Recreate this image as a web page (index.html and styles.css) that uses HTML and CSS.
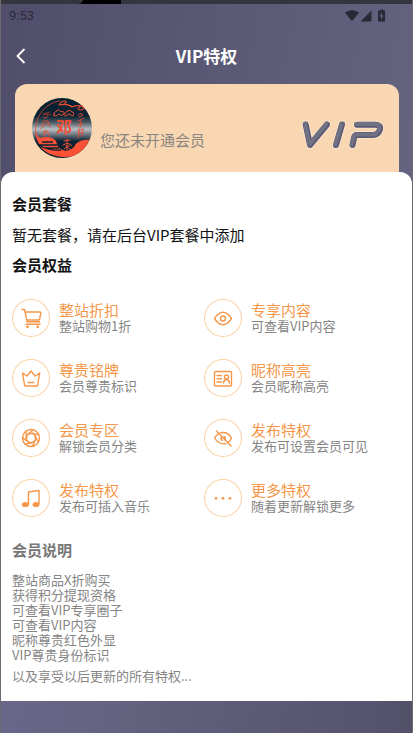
FILE: index.html
```html
<!DOCTYPE html>
<html lang="zh-CN">
<head>
<meta charset="utf-8">
<meta name="viewport" content="width=device-width, initial-scale=1">
<title>VIP特权</title>
<link rel="stylesheet" href="styles.css">
</head>
<body>
<div class="window-edge"><svg width="120" height="4" aria-hidden="true"><path d="M76 4Q81 4 82 0H120V4Z" fill="#000"/></svg></div>
<div class="status">
  <span>9:53</span>
  <svg class="status-icons" width="42" height="14" viewBox="0 0 42 14" aria-hidden="true">
    <path d="M0 3.7Q7 -1.7 14 3.7L7 12.3Z"/><path d="M26.500 1.500V12.500H15.500Z"/>
    <path fill-rule="evenodd" d="M34 1.500H35.500V0.500H38.500V1.500H40V12.500H33V1.500ZM37 3.500L34.500 7.500H36V10.500L38.500 6.500H37Z"/>
  </svg>
</div>
<header class="topbar">
  <button class="back" type="button" aria-label="返回"><svg width="10" height="16" viewBox="0 0 10 16"><path d="M8.500 1L1.500 8L8.500 15" fill="none" stroke="#fff" stroke-width="1.800"/></svg></button>
  <h1>VIP特权</h1>
</header>
<main>
  <section class="card">
    <svg class="avatar" viewBox="0 0 60 60" aria-hidden="true">
      <defs>
        <linearGradient id="metal" x1="0" y1="0" x2="0" y2="1"><stop offset="0" stop-color="#03202f"/><stop offset=".3" stop-color="#0b2433"/><stop offset=".4" stop-color="#46545f"/><stop offset=".52" stop-color="#b9bfc4"/><stop offset=".62" stop-color="#626d77"/><stop offset=".72" stop-color="#0b2231"/><stop offset="1" stop-color="#03202f"/></linearGradient>
        <clipPath id="disc"><circle cx="30" cy="30" r="30"/></clipPath>
      </defs>
      <g clip-path="url(#disc)">
        <path fill="url(#metal)" d="M0 0H60V60H0Z"/>
        <path fill="#fb5137" d="M3 30Q4 39 9 40Q13 38 20 40Q25 42 25 47Q28 52 34 53Q42 51 43 47Q47 41 60 42V52Q46 60 30 59Q4 57 3 30Z"/>
        <path d="M6 47Q18 53 29 52M10 44H21M7 47H25M13 50H27" fill="none" stroke="#082231" stroke-width="1.300"/>
      </g>
      <g fill="none" stroke="#e94c36" stroke-linecap="round" stroke-linejoin="round">
        <path d="M4 38Q2 23 11 12Q19 4 28 3" stroke-width=".8" stroke-dasharray="3 1"/>
        <path d="M27 7Q29 3 33 3Q36 4 32 6Q29 7 27 7Q36 5 40 9Q44 7 50 8Q54 12 48 12Q44 11 48 9" stroke-width="1.100"/>
        <path d="M22 18Q21 14 25 13Q26 10 29 14Q32 12 32 16Q29 19 27 16Q23 20 22 16M33 18Q32 14 36 13Q38 11 40 14Q43 14 41 18L37 16L34 18" stroke-width="1"/>
        <path d="M11 16L18 14M11 18Q15 14 16 18M14 16L19 17" stroke="#9b3a32" stroke-width=".9"/>
        <path d="M12 20L15 19M11 24Q11 29 9 31M12 23H16L18 29M12 28L16 25M11 34L16 33M13 32L12 38M15 35Q18 34 17 38" stroke-width=".9"/>
        <path d="M46 17Q50 14 51 17L47 19M46 23L52 20M45 27Q50 24 51 27M49 22L48 30M46 33L51 31M46 36L51 34M47 31L46 40M51 31L50 38" stroke-width=".9"/>
        <path d="M32 43L38 42M35 41V48M31 47Q37 43 40 48M32 51L38 47M34 48L39 52M35 48V53" stroke-width="1"/>
      </g>
      <text x="32" y="35" text-anchor="middle" class="avatar-name">邓</text>
    </svg>
    <p class="member-state">您还未开通会员</p>
    <svg class="vip-mark" width="86" height="34" viewBox="0 0 86 34" role="img" aria-label="VIP">
      <defs><path id="letters" d="M6.700 7.500L11 28L28 7.500M43 7.500L37 28M58 7.700H76Q82 7.700 81 12.500Q79 18 74 18H58Q55.500 18 55 21L53.500 28"/></defs>
      <g fill="none" stroke-linecap="round" stroke-linejoin="round">
        <use href="#letters" stroke="#fbe3c8" stroke-width="8"/>
        <use href="#letters" stroke="#5a5975" stroke-width="6"/>
        <use href="#letters" stroke="#717184" stroke-width="4" transform="translate(-.6 -.6)"/>
      </g>
    </svg>
  </section>
  <section class="sheet">
    <h2>会员套餐</h2>
    <p class="empty">暂无套餐，请在后台VIP套餐中添加</p>
    <h2>会员权益</h2>
    <ul class="benefits">
      <li><svg class="icon" viewBox="0 0 38 38"><path d="M10 10.500H12.500L15.200 22.800H27.500M13 13H28Q29 13 28.800 14L27.700 20Q27.500 21 26.500 21H15M14 25.200H28"/><circle class="solid" cx="15.500" cy="27.800" r="1.400"/><circle class="solid" cx="25.800" cy="27.800" r="1.400"/></svg><div><h3>整站折扣</h3><p>整站购物1折</p></div></li>
      <li><svg class="icon" viewBox="0 0 38 38"><path d="M10.500 19.500Q14.500 13.300 19 13.300Q23.500 13.300 27.500 19.500Q23.500 25.700 19 25.700Q14.500 25.700 10.500 19.500Z"/><circle cx="19" cy="19.500" r="2.500"/></svg><div><h3>专享内容</h3><p>可查看VIP内容</p></div></li>
      <li><svg class="icon" viewBox="0 0 38 38"><path d="M10.500 14L12.500 26Q12.700 27 14 27H24.500Q25.500 27 25.700 26L27.700 14L23 17L19 12L15 17ZM16 23.500H22"/></svg><div><h3>尊贵铭牌</h3><p>会员尊贵标识</p></div></li>
      <li><svg class="icon" viewBox="0 0 38 38"><rect x="10.500" y="12.500" width="17" height="14.500" rx="1"/><path d="M13 16.500H17.500M13 19.700H17.500M13 23H17.500M19.500 24Q20 20.500 22.500 20.500Q25 20.500 25.500 24"/><circle cx="22.500" cy="18" r="2"/></svg><div><h3>昵称高亮</h3><p>会员昵称高亮</p></div></li>
      <li><svg class="icon" viewBox="0 0 38 38"><circle cx="19" cy="19" r="8.500"/><path id="blade" d="M21.500 10.800L15.800 15.200"/><use href="#blade" transform="rotate(51 19 19)"/><use href="#blade" transform="rotate(103 19 19)"/><use href="#blade" transform="rotate(154 19 19)"/><use href="#blade" transform="rotate(206 19 19)"/><use href="#blade" transform="rotate(257 19 19)"/><use href="#blade" transform="rotate(309 19 19)"/><circle cx="19" cy="19" r="4.500"/></svg><div><h3>会员专区</h3><p>解锁会员分类</p></div></li>
      <li><svg class="icon" viewBox="0 0 38 38"><path d="M14.500 14.800Q12 16.300 10.500 19Q14.500 25.500 22 24.800M16.500 13.700Q24 12.500 27.500 19Q26.500 21.500 24.500 23M12.500 12L27 27M17.500 17.500Q16 20 18.500 21.500M20 17.500Q21.500 18 21.500 20"/></svg><div><h3>发布特权</h3><p>发布可设置会员可见</p></div></li>
      <li><svg class="icon" viewBox="0 0 38 38"><path d="M16.500 25.500V13L27 11.500V25"/><ellipse class="solid" cx="13.300" cy="25.500" rx="3.400" ry="2.600"/><ellipse class="solid" cx="24" cy="25.500" rx="3.400" ry="2.600"/></svg><div><h3>发布特权</h3><p>发布可插入音乐</p></div></li>
      <li><svg class="icon" viewBox="0 0 38 38"><g class="solid"><circle cx="12" cy="19.300" r="1.400"/><circle cx="19" cy="19.300" r="1.400"/><circle cx="26" cy="19.300" r="1.400"/></g></svg><div><h3>更多特权</h3><p>随着更新解锁更多</p></div></li>
    </ul>
    <div class="notes">
      <h2>会员说明</h2>
      <ul>
        <li>整站商品X折购买</li>
        <li>获得积分提现资格</li>
        <li>可查看VIP专享圈子</li>
        <li>可查看VIP内容</li>
        <li>昵称尊贵红色外显</li>
        <li>VIP尊贵身份标识</li>
      </ul>
      <p>以及享受以后更新的所有特权...</p>
    </div>
  </section>
</main>
</body>
</html>
```
FILE: styles.css
```css
* { box-sizing: border-box; margin: 0; padding: 0; }
body {
  min-height: 100vh;
  display: flex;
  flex-direction: column;
  border: solid #6c6c70;
  border-width: 0 1px;
  background: linear-gradient(102deg, #504e6a 0%, #6a6986 100%);
  color: #111;
  font-family: "Noto Sans CJK SC", sans-serif;
  font-size: 15px;
}
body::after {
  content: "";
  flex: 1;
  min-height: 32px;
  background: linear-gradient(95deg, #68678a 0%, #63627f 30%, #53516a 100%);
}
ul { list-style: none; }
.window-edge { height: 4px; background: #35363d; }
.window-edge svg { display: block; }
.status {
  display: flex;
  justify-content: space-between;
  align-items: center;
  height: 24px;
  padding: 0 25px 0 8px;
  font: 13px/24px Roboto, sans-serif;
  color: #2c2b3b;
}
.status-icons { fill: #2a2937; }
.topbar {
  display: grid;
  grid-template-columns: 40px 1fr 40px;
  align-items: center;
  height: 56px;
  color: #fff;
}
.topbar h1 { font-size: 17px; line-height: 24px; text-align: center; }
.back { height: 40px; padding: 0; border: 0; background: none; }
.back svg { display: block; margin: 0 auto; }
.card {
  display: flex;
  align-items: center;
  height: 88px;
  margin: 0 13px 0 14px;
  padding: 0 14px 0 17px;
  border-radius: 12px 12px 0 0;
  background: #f9d7b2;
}
.avatar { width: 60px; height: 60px; }
.avatar-name { fill: #f24e34; font-size: 16px; font-weight: 700; }
.member-state { flex: 1; padding: 24px 0 0 8px; line-height: 24px; color: #888580; }
.vip-mark { margin-top: 12px; }
.sheet {
  padding: 17px 16px 18px 11px;
  border-radius: 12px 12px 0 0;
  background: #fff;
}
h2 { font-size: 15px; line-height: 30px; }
.empty { line-height: 31px; }
.benefits {
  display: grid;
  grid-template-columns: 1fr 1fr;
  row-gap: 22px;
  margin-top: 19px;
}
.benefits li { display: flex; align-items: center; gap: 9px; height: 38px; }
.benefits div { padding-bottom: 2px; }
.icon {
  width: 38px;
  height: 38px;
  border-radius: 50%;
  box-shadow: inset 0 0 0 1px #fbd0a4;
  fill: none;
  stroke: #f5974a;
  stroke-width: 1.4;
  stroke-linecap: round;
  stroke-linejoin: round;
}
.icon .solid { fill: #f5974a; stroke: none; }
.benefits h3 { font-size: 15px; font-weight: 400; line-height: 16px; color: #f5974a; }
.benefits p, .notes p, .notes li { font-size: 13px; line-height: 15px; color: #858585; }
.notes { margin-top: 18px; }
.notes h2 { color: #777; }
.notes ul { margin: 7px 0 6px; }
```
